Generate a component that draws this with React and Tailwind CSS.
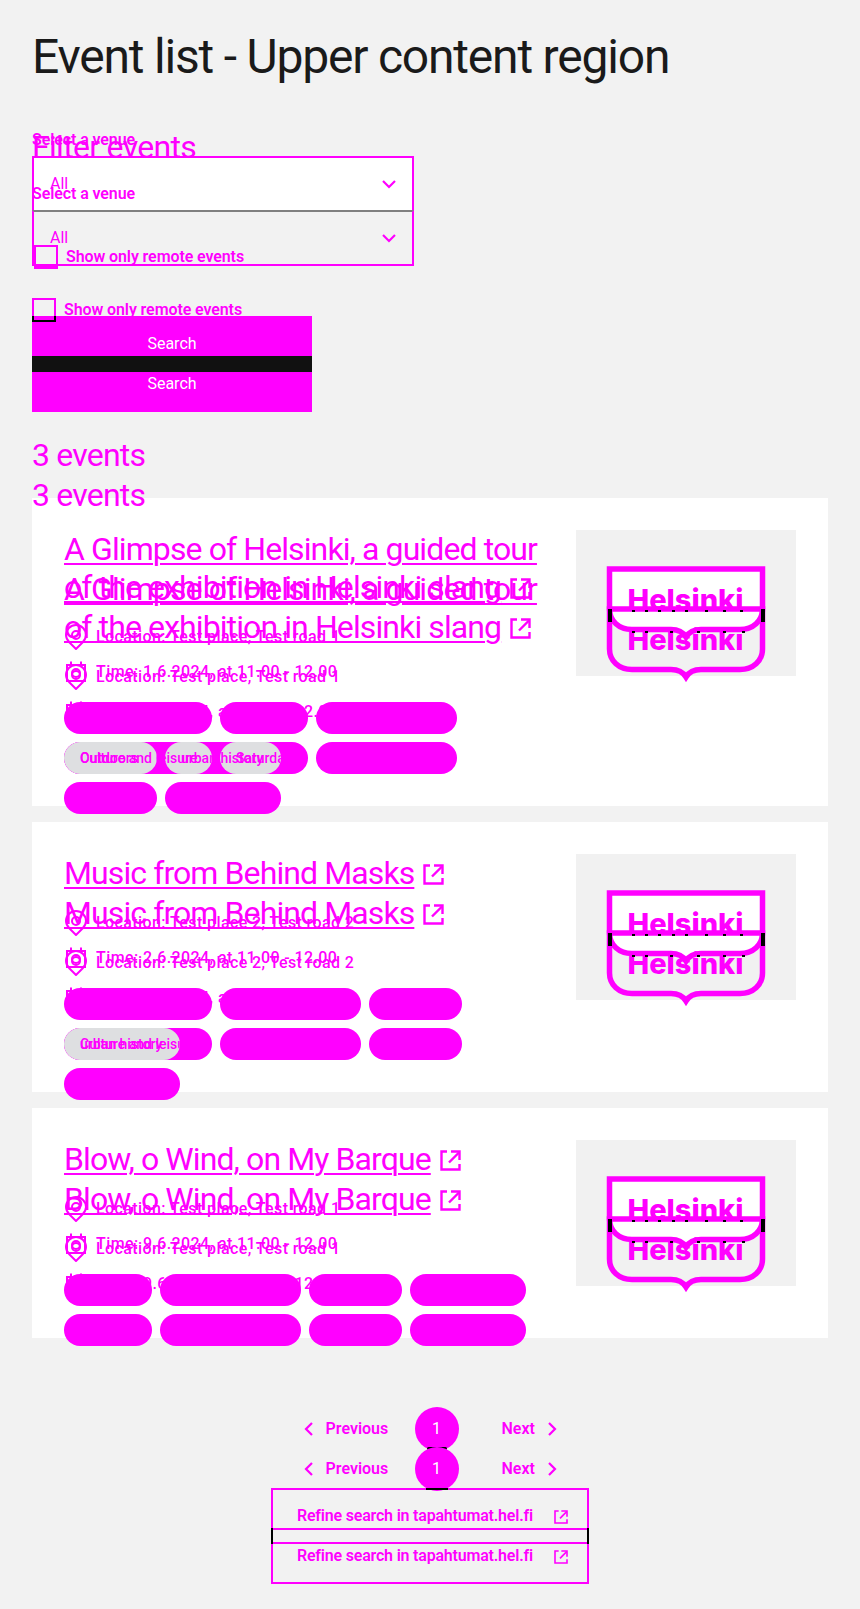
const FONT = "font-['Roboto','Liberation_Sans',sans-serif]";

const CARDS = [
  {
    h: "h-[77px]",
    title: ["A Glimpse of Helsinki, a guided tour", "of the exhibition in Helsinki slang"],
    location: "Test place, Test road 1",
    time: "1.6.2024, at 11.00 - 12.00",
    tags: [
      { t: "Culture and leisure", w: "w-[148px]" },
      { t: "Saturday", w: "w-[88px]" },
      { t: "Guided exhibition", w: "w-[141px]" },
      { t: "Outdoors", w: "w-[93px]" },
      { t: "urban history", w: "w-[116px]" },
    ],
    overlap: [
      { left: "left-0", w: "w-[93px]", a: "Outdoors", aAt: "left-[16px]", b: "Culture and leisure", bAt: "left-[16px]" },
      { left: "left-[101px]", w: "w-[47px]", a: "urban history", aAt: "left-[16px]", b: "Culture and leisure", bAt: "left-[-85px]" },
      { left: "left-[156px]", w: "w-[61px]", a: "urban history", aAt: "left-[-39px]", b: "Saturday", bAt: "left-[16px]" },
    ],
  },
  {
    h: "h-[39px]",
    title: ["Music from Behind Masks"],
    location: "Test place 2, Test road 2",
    time: "2.6.2024, at 11.00 - 12.00",
    tags: [
      { t: "Culture and leisure", w: "w-[148px]" },
      { t: "Guided exhibition", w: "w-[141px]" },
      { t: "Outdoors", w: "w-[93px]" },
      { t: "urban history", w: "w-[116px]" },
    ],
    overlap: [
      { left: "left-0", w: "w-[116px]", a: "urban history", aAt: "left-[16px]", b: "Culture and leisure", bAt: "left-[16px]" },
    ],
  },
  {
    h: "h-[39px]",
    title: ["Blow, o Wind, on My Barque"],
    location: "Test place, Test road 1",
    time: "9.6.2024, at 11.00 - 12.00",
    tags: [
      { t: "Saturday", w: "w-[88px]" },
      { t: "Guided exhibition", w: "w-[141px]" },
      { t: "Outdoors", w: "w-[93px]" },
      { t: "urban history", w: "w-[116px]" },
    ],
    overlap: [],
  },
];

function ExternalIcon({ className }) {
  return (
    <svg viewBox="0 0 21 21" className={className} fill="none" stroke="#ff00ff" strokeWidth="2.4">
      <path d="M7 1.500H1.500v18h18V14" />
      <path d="M9 12.500 19 2.500" />
      <path d="M11 1.500h8.500V10" />
    </svg>
  );
}

function Chevron({ dir, className }) {
  const d = dir === "left" ? "M8 1 2 7l6 6" : dir === "right" ? "M2 1l6 6-6 6" : "M1 2l6 6 6-6";
  const box = dir === "down" ? "0 0 14 10" : "0 0 10 14";
  return (
    <svg viewBox={box} className={className} fill="none" stroke="#ff00ff" strokeWidth="2.2">
      <path d={d} />
    </svg>
  );
}

function Pin() {
  return (
    <svg viewBox="0 0 24 26" className="w-[24px] h-[26px] shrink-0" fill="none" stroke="#ff00ff" strokeWidth="2">
      <path d="M12 25 5.500 18.500C3 16 2 14 2 11A10 10 0 0 1 22 11c0 3-1 5-3.500 7.500z" />
      <circle cx="12" cy="11" r="4" />
    </svg>
  );
}

function Clock() {
  return (
    <svg viewBox="0 0 24 24" className="w-[24px] h-[24px] shrink-0" fill="none" stroke="#ff00ff" strokeWidth="2">
      <path d="M3 5h18v16H3z" />
      <path d="M7 1.500v5M17 1.500v5" />
      <circle cx="12" cy="13" r="4" />
    </svg>
  );
}

function Logo({ filled }) {
  return (
    <svg viewBox="0 0 158 74" className="w-[158px] h-[74px] overflow-visible" fill="none">
      <path
        d="M2.500 3H155.500V43C155.500 55 146 63.500 133 63.500H94C87 63.500 82 66 79 71C76 66 71 63.500 64 63.500H25C12 63.500 2.500 55 2.500 43Z"
        fill={filled ? "#ffffff" : "none"}
        stroke="#ff00ff"
        strokeWidth="5.500"
      />
      <text
        x="78.500"
        y={44}
        textAnchor="middle"
        fill="#ff00ff"
        fontFamily="Inter, 'Liberation Sans', sans-serif"
        fontWeight="800"
        fontSize="29"
        letterSpacing="0"
      >
        Helsinki
      </text>
    </svg>
  );
}

function Dots({ xs, top }) {
  return (
    <>
      {xs.map((x, i) => (
        <span key={i} className={"absolute w-[3px] h-[2px] bg-black " + top} style={{ left: x }} />
      ))}
    </>
  );
}

function Card({ card, ghost }) {
  return (
    <article className={"flex justify-between p-[32px] " + (ghost ? "bg-transparent" : "bg-white")}>
      <div className="w-[480px]">
        <h3
          className={
            "whitespace-nowrap text-[32px] leading-[38.4px] text-[#ff00ff] tracking-[-0.9px] underline underline-offset-[3px] decoration-[1.5px] " +
            card.h
          }
        >
          {card.title.map((line, i) => (
            <span key={i}>
              {i > 0 && <br />}
              {line}
            </span>
          ))}
          <ExternalIcon className="inline-block w-[21px] h-[21px] ml-[9px] align-[-1px]" />
        </h3>
        <div className="mt-[18px] flex items-center gap-[8px] h-[24px] text-[16px] font-medium text-[#ff00ff] tracking-[0.4px]">
          <Pin />
          <span>Location: {card.location}</span>
        </div>
        <div className="mt-[11px] flex items-center gap-[8px] h-[24px] text-[16px] font-medium text-[#ff00ff] tracking-[0.4px]">
          <Clock />
          <span>Time: {card.time}</span>
        </div>
        <div className="relative mt-[18px] flex flex-wrap gap-[8px]">
          {card.tags.map((tag) => (
            <span
              key={tag.t}
              className={
                "h-[32px] rounded-full bg-[#ff00ff] text-[#ff00ff] text-[14px] font-medium leading-[32px] px-[16px] whitespace-nowrap overflow-hidden " +
                tag.w
              }
            >
              {tag.t}
            </span>
          ))}
          {ghost &&
            card.overlap.map((o) => (
              <span
                key={o.left}
                className={
                  "absolute top-0 h-[32px] rounded-full bg-[#dedfe1] overflow-hidden text-[14px] font-medium leading-[32px] text-[#ff00ff] whitespace-nowrap " +
                  o.left +
                  " " +
                  o.w
                }
              >
                <span className={"absolute top-0 " + o.aAt}>{o.a}</span>
                <span className={"absolute top-0 " + o.bAt}>{o.b}</span>
              </span>
            ))}
        </div>
      </div>
      <div className={"relative w-[220px] h-[146px] flex items-center justify-center " + (ghost ? "" : "bg-[#f1f1f1]")}>
        <Logo filled={!ghost} />
        {ghost && (
          <>
            <span className="absolute left-[32px] top-[39px] w-[4px] h-[13px] bg-black" />
            <span className="absolute left-[185px] top-[39px] w-[4px] h-[13px] bg-black" />
            <Dots top="top-[40px]" xs={[56, 69, 82, 96, 109, 129, 147, 164]} />
            <Dots top="top-[61px]" xs={[56, 69, 94, 121, 147, 166]} />
          </>
        )}
      </div>
    </article>
  );
}

function Layer({ ghost }) {
  return (
    <div className={ghost ? "absolute inset-0" : "relative"}>
      {ghost ? (
        <h2 className="pt-[128px] text-[32px] leading-[38px] text-[#ff00ff] tracking-[-0.7px] mb-[16px] ml-[32px]">Filter events</h2>
      ) : (
        <h1 className="pt-[28px] pb-[42px] pl-[32px] text-[48px] leading-[58px] text-[#1a1a1a] tracking-[-1.2px] whitespace-nowrap">
          Event list - Upper content region
        </h1>
      )}
      <div className="pl-[32px]">
        <label className="block h-[24px] leading-[24px] mb-[4px] text-[16px] font-semibold text-[#ff00ff] tracking-[-0.1px]">
          Select a venue
        </label>
        <div
          className={
            "relative w-[382px] h-[56px] border-2 border-[#ff00ff] flex items-center justify-between pl-[16px] pr-[16px] text-[16px] text-[#ff00ff] " +
            (ghost ? "border-t-[#808080]" : "bg-white border-b-[#808080]")
          }
        >
          <span>All</span>
          <Chevron dir="down" className="w-[14px] h-[10px]" />
        </div>
        <div className={ghost ? "flex items-center gap-[8px] mt-[32px] h-[24px]" : "flex items-center gap-[8px] mt-[33px] ml-[2px] h-[24px]"}>
          <span className="relative w-[24px] h-[24px] border-2 border-[#ff00ff]">
            {!ghost && <span className="absolute left-[-2px] right-[-2px] bottom-[-2px] h-[3px] bg-[#ff00ff]" />}
          </span>
          <span className="text-[16px] font-semibold text-[#ff00ff] tracking-[-0.1px]">Show only remote events</span>
        </div>
        <button
          className={
            "relative block w-[280px] h-[56px] bg-[#ff00ff] text-white text-[16px] " +
            (ghost ? "mt-[34px]" : "mt-[47px]")
          }
        >
          {ghost && (
            <>
              <span className="absolute left-0 right-0 top-0 h-[16px] bg-[#111111]" />
              <span className="absolute left-0 top-[-40px] w-[24px] h-[6px] border-x-2 border-b-2 border-black bg-[#ff00ff]" />
            </>
          )}
          <span className="relative">Search</span>
        </button>
        <h2 className="mt-[64px] mb-[24px] text-[32px] leading-[38px] text-[#ff00ff] tracking-[-0.8px]">3 events</h2>
      </div>
      <div className="mx-[32px] flex flex-col gap-[16px]">
        {CARDS.map((c) => (
          <Card key={c.title[0]} card={c} ghost={ghost} />
        ))}
      </div>
      <nav className="relative mt-[69px] flex items-center justify-center h-[44px] text-[16px] font-semibold text-[#ff00ff]">
        <Chevron dir="left" className="w-[10px] h-[14px]" />
        <span className="ml-[12px] w-[62px]">Previous</span>
        <span className="relative ml-[27px] mr-[43px] w-[44px] h-[44px] rounded-full bg-[#ff00ff] text-white text-center leading-[44px] font-normal">
          1
          {!ghost && <span className="absolute left-[12px] top-[40px] w-[20px] h-[3px] rounded-full bg-black" />}
          {ghost && <span className="absolute left-[11px] top-[41px] w-[22px] h-[2px] bg-black" />}
        </span>
        <span className="w-[33px]">Next</span>
        <Chevron dir="right" className="ml-[12px] w-[10px] h-[14px]" />
      </nav>
      <div className="mt-[37px] flex justify-center">
        <a className="relative w-[318px] h-[56px] border-2 border-[#ff00ff] flex items-center pl-[24px] text-[16px] font-semibold text-[#ff00ff] tracking-[-0.2px]">
          <span>Refine search in tapahtumat.hel.fi</span>
          <ExternalIcon className="absolute left-[281px] top-[20px] w-[14px] h-[14px]" />
          {ghost && (
            <>
              <span className="absolute left-[-2px] top-[-2px] w-[2px] h-[16px] bg-black" />
              <span className="absolute right-[-2px] top-[-2px] w-[2px] h-[16px] bg-black" />
            </>
          )}
        </a>
      </div>
    </div>
  );
}

export default function App() {
  return (
    <div className={"relative w-[860px] h-[1609px] overflow-hidden bg-[#f2f2f2] " + FONT}>
      <Layer />
      <Layer ghost />
    </div>
  );
}
